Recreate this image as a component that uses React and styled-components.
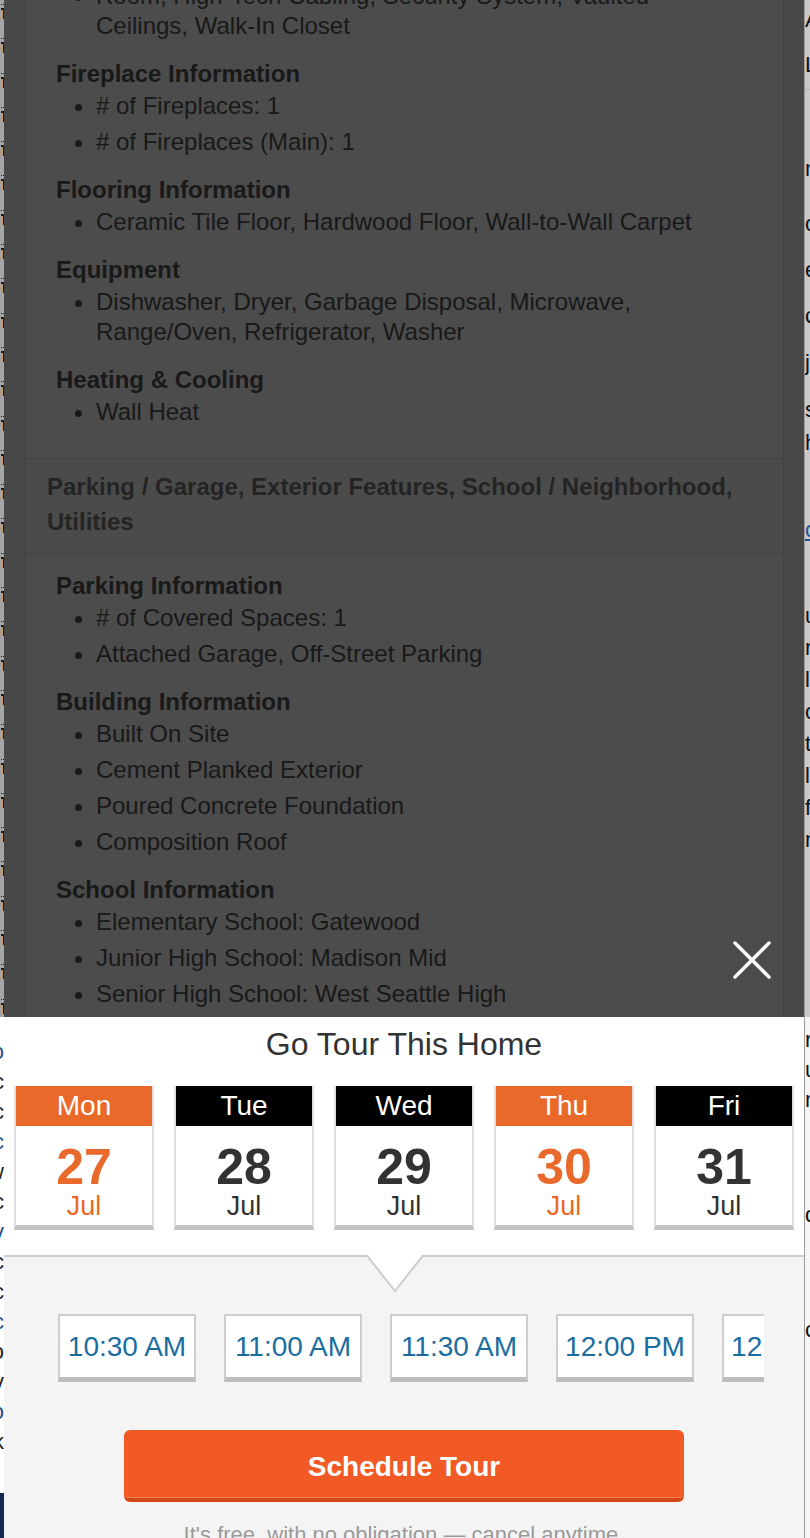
import React from 'react';
import styled, { createGlobalStyle } from 'styled-components';

const GlobalStyle = createGlobalStyle`
  html, body { margin: 0; padding: 0; background: #ffffff; }
  body { font-family: "Liberation Sans", Arial, Helvetica, sans-serif; }
  * { box-sizing: border-box; }
`;

const Page = styled.div`
  display: flex;
  width: 810px;
  height: 1538px;
  overflow: hidden;
`;

/* ---------- background page visible at the edges ---------- */
const EdgeLeft = styled.div`
  flex: 0 0 4px;
  min-width: 0;
  display: flex;
  flex-direction: column;
  overflow: hidden;
`;

const EdgeRight = styled.div`
  flex: 0 0 6px;
  min-width: 0;
  display: flex;
  flex-direction: column;
  overflow: hidden;
  border-left: 1px solid #9c9c9c;
`;

const EdgeSegment = styled.div`
  flex: ${p => (p.$grow ? '1 1 auto' : `0 0 ${p.$h}px`)};
  background: ${p => p.$bg};
  display: flex;
  flex-direction: column;
  align-items: ${p => (p.$end ? 'flex-end' : 'flex-start')};
  overflow: hidden;
  padding-top: ${p => p.$pt || 0}px;
`;

const EdgeLine = styled.div`
  flex: none;
  white-space: nowrap;
  font-size: 22px;
  height: ${p => p.$h || 34}px;
  line-height: ${p => p.$h || 34}px;
  color: ${p => p.$color || '#111'};
  text-decoration: ${p => (p.$link ? 'underline' : 'none')};
  border-bottom: ${p => (p.$rule ? '1px solid #b5b5b5' : '0')};
`;

/* tiny fragments of a control on the page behind the modal */
const EdgeMark = styled.div`
  flex: none;
  width: 4px;
  height: 34.3px;
  display: flex;
  flex-direction: column;
  align-items: flex-end;
  padding-top: 4px;
  gap: 2px;
`;

const MarkDots = styled.span`
  width: 3px;
  height: 2px;
  border-top: 1px dotted #222;
`;

const MarkBar = styled.span`
  width: 3px;
  height: 11px;
  border-top: 2px solid #1a1a1a;
  border-right: 1px solid #1a1a1a;
  background: #c49a6c;
`;

/* ---------- modal ---------- */
const Modal = styled.div`
  flex: 0 0 800px;
  width: 800px;
  min-width: 0;
  display: flex;
  flex-direction: column;
  background: #f4f4f4;
`;

const Backdrop = styled.div`
  position: relative;
  flex: 0 0 1017px;
  overflow: hidden;
  background: #f2f2f2;
  padding: 0 20px 0 21px;
`;

const Dim = styled.div`
  position: absolute;
  inset: 0;
  background: rgba(0, 0, 0, 0.7);
`;

const CloseButton = styled.button`
  position: absolute;
  right: 32px;
  bottom: 37px;
  width: 40px;
  height: 40px;
  padding: 0;
  border: 0;
  background: transparent;
  cursor: pointer;
  display: flex;
  align-items: center;
  justify-content: center;
`;

const Details = styled.div`
  background: #ffffff;
  border-left: 1px solid #dcdcdc;
  border-right: 1px solid #dcdcdc;
  color: #555555;
`;

const SectionHeader = styled.div`
  border-top: 1px solid #dcdcdc;
  border-bottom: 1px solid #dcdcdc;
  background: #fbfbfb;
  padding: 10px 20px 14px 21px;
  font-size: 24px;
  font-weight: 700;
  line-height: 35px;
  color: #7a7a7a;
`;

const SectionBody = styled.div`
  padding: ${p => (p.$first ? '0' : '17px')} 56px 31px 30px;
`;

const Group = styled.div`
  & + & { margin-top: 18px; }
  margin-top: ${p => (p.$cut ? '-19px' : '0')};
`;

const GroupTitle = styled.h4`
  margin: 0 0 2px;
  font-size: 24px;
  line-height: 30px;
  font-weight: 700;
  color: #555555;
`;

const Items = styled.ul`
  margin: 0;
  padding-left: 40px;
  list-style: disc;
`;

const Item = styled.li`
  font-size: 24px;
  line-height: 30px;
  & + & { margin-top: 6px; }
`;

/* ---------- tour sheet ---------- */
const DateSection = styled.div`
  position: relative;
  flex: none;
  background: #ffffff;
  border-bottom: 2px solid #cccccc;
  padding: 7px 10px 25px;
`;

const Title = styled.h2`
  margin: 0;
  text-align: center;
  font-size: 32px;
  line-height: 40px;
  font-weight: 400;
  color: #333333;
`;

const DateRow = styled.div`
  display: flex;
  gap: 20px;
  margin-top: 22px;
`;

const DateCard = styled.div`
  flex: 0 0 140px;
  background: #ffffff;
  border: 2px solid #dfdfdf;
  border-top: 0;
  border-bottom: 5px solid #c3c3c3;
  text-align: center;
  cursor: pointer;
`;

const DayName = styled.div`
  height: 40px;
  line-height: 40px;
  font-size: 28px;
  color: #ffffff;
  background: ${p => (p.$active ? '#e8692a' : '#000000')};
`;

const DayNum = styled.div`
  padding-top: 19px;
  font-size: 50px;
  line-height: 44px;
  font-weight: 700;
  color: ${p => (p.$active ? '#e8692a' : '#333333')};
`;

const Month = styled.div`
  padding: 3px 0 5px;
  font-size: 27px;
  line-height: 28px;
  color: ${p => (p.$active ? '#e8692a' : '#333333')};
`;

const Notch = styled.svg`
  position: absolute;
  top: 100%;
  left: 362px;
  display: block;
`;

const TimesSection = styled.div`
  flex: 1 1 auto;
  min-height: 0;
  background: #f4f4f4;
  padding: 57px 40px 0;
  display: flex;
  flex-direction: column;
`;

const Times = styled.div`
  flex: none;
  display: flex;
  min-width: 0;
  overflow: hidden;
`;

const TimeButton = styled.button`
  flex: 0 0 138px;
  margin: 0 14px;
  height: 68px;
  padding: 0;
  background: #ffffff;
  border: 2px solid #cdcdcd;
  border-bottom: 5px solid #bdbdbd;
  font-family: inherit;
  font-size: 28px;
  line-height: 61px;
  color: #1a6d9f;
  white-space: nowrap;
  overflow: hidden;
  cursor: pointer;
`;

const ScheduleButton = styled.button`
  align-self: center;
  flex: none;
  margin-top: 48px;
  width: 560px;
  height: 72px;
  padding: 6px 0 0;
  border: 0;
  border-bottom: 4px solid #d34a18;
  border-radius: 6px;
  background: #f15a24;
  box-shadow: inset 0 -1px 0 #f47d52;
  font-family: inherit;
  font-size: 28px;
  line-height: 62px;
  font-weight: 700;
  color: #ffffff;
  cursor: pointer;
`;

const Note = styled.p`
  flex: none;
  margin: 20px 0 0;
  text-align: center;
  font-size: 22px;
  line-height: 26px;
  color: #9a9a9a;
`;

const days = [
  { name: 'Mon', num: 27, active: true },
  { name: 'Tue', num: 28 },
  { name: 'Wed', num: 29 },
  { name: 'Thu', num: 30, active: true },
  { name: 'Fri', num: 31 },
];

const times = ['10:30 AM', '11:00 AM', '11:30 AM', '12:00 PM', '12:30 PM', '1:00 PM'];

const firstGroups = [
  { title: 'Fireplace Information', items: ['# of Fireplaces: 1', '# of Fireplaces (Main): 1'] },
  { title: 'Flooring Information', items: ['Ceramic Tile Floor, Hardwood Floor, Wall-to-Wall Carpet'] },
  { title: 'Equipment', items: ['Dishwasher, Dryer, Garbage Disposal, Microwave, Range/Oven, Refrigerator, Washer'] },
  { title: 'Heating & Cooling', items: ['Wall Heat'] },
];

const secondGroups = [
  { title: 'Parking Information', items: ['# of Covered Spaces: 1', 'Attached Garage, Off-Street Parking'] },
  { title: 'Building Information', items: ['Built On Site', 'Cement Planked Exterior', 'Poured Concrete Foundation', 'Composition Roof'] },
  { title: 'School Information', items: ['Elementary School: Gatewood', 'Junior High School: Madison Mid', 'Senior High School: West Seattle High'] },
  { title: 'Utilities Information', items: ['Sewer Connected, Water Connected', 'Water Company: Seattle'] },
];

const leftTop = Array.from({ length: 30 }, (_, i) => i);
const leftBottom = ['o', 'c', 'c', 'c', 'w', 'c', 'v', 'c', 'c', 'c', 'o', 'v', 'o', 'k'];
const rightTop = [
  { t: 'Area', h: 40 }, { t: 'Lot', h: 50, rule: true }, { t: '', h: 40, rule: true },
  { t: 'more', h: 78 }, { t: 'open', h: 32 }, { t: 'everyone', h: 60 }, { t: 'close', h: 32 },
  { t: 'just', h: 62 }, { t: 'said', h: 32 }, { t: 'have', h: 34 }, { t: 'open', h: 140, link: true },
  { t: 'used', h: 32 }, { t: 'run', h: 32 }, { t: 'level', h: 32 }, { t: 'old', h: 32 },
  { t: 'to', h: 32 }, { t: 'list', h: 32 }, { t: 'find', h: 32 }, { t: 'new', h: 32 },
];
const rightBottom = [
  { t: 'run', h: 30 }, { t: 'use', h: 30 }, { t: 'new', h: 30 }, { t: 'done', h: 200 },
  { t: 'close', h: 30 },
];

export default function App() {
  return (
    <>
      <GlobalStyle />
      <Page>
        <EdgeLeft>
          <EdgeSegment $h={1017} $bg="#a4a4a4" $end>
            {leftTop.map(i => (
              <EdgeMark key={i}>
                <MarkDots />
                <MarkBar />
              </EdgeMark>
            ))}
          </EdgeSegment>
          <EdgeSegment $h={476} $bg="#ffffff" $end $pt={20}>
            {leftBottom.map((t, i) => (
              <EdgeLine key={i} $h={30} $color={i % 3 === 0 ? '#1f4f8a' : '#222'}>{t}</EdgeLine>
            ))}
          </EdgeSegment>
          <EdgeSegment $grow $bg="#13284a" />
        </EdgeLeft>

        <Modal>
          <Backdrop>
            <Details>
              <SectionBody $first>
                <Group $cut>
                  <Items>
                    <Item>Room, High-Tech Cabling, Security System, Vaulted Ceilings, Walk-In Closet</Item>
                  </Items>
                </Group>
                {firstGroups.map(g => (
                  <Group key={g.title}>
                    <GroupTitle>{g.title}</GroupTitle>
                    <Items>
                      {g.items.map(it => <Item key={it}>{it}</Item>)}
                    </Items>
                  </Group>
                ))}
              </SectionBody>
              <SectionHeader>Parking / Garage, Exterior Features, School / Neighborhood, Utilities</SectionHeader>
              <SectionBody>
                {secondGroups.map(g => (
                  <Group key={g.title}>
                    <GroupTitle>{g.title}</GroupTitle>
                    <Items>
                      {g.items.map(it => <Item key={it}>{it}</Item>)}
                    </Items>
                  </Group>
                ))}
              </SectionBody>
            </Details>
            <Dim />
            <CloseButton aria-label="Close">
              <svg width="40" height="40" viewBox="0 0 40 40">
                <path d="M3 3 L37 37 M37 3 L3 37" stroke="#ffffff" strokeWidth="3.4" strokeLinecap="round" fill="none" />
              </svg>
            </CloseButton>
          </Backdrop>

          <DateSection>
            <Title>Go Tour This Home</Title>
            <DateRow>
              {days.map(d => (
                <DateCard key={d.name}>
                  <DayName $active={d.active}>{d.name}</DayName>
                  <DayNum $active={d.active}>{d.num}</DayNum>
                  <Month $active={d.active}>Jul</Month>
                </DateCard>
              ))}
            </DateRow>
            <Notch width="58" height="38" viewBox="0 0 58 38">
              <polygon points="0,-2 29,36 58,-2" fill="#ffffff" />
              <polyline points="0.5,0 29,36 57.5,0" fill="none" stroke="#cccccc" strokeWidth="2" />
            </Notch>
          </DateSection>

          <TimesSection>
            <Times>
              {times.map(t => <TimeButton key={t}>{t}</TimeButton>)}
            </Times>
            <ScheduleButton>Schedule Tour</ScheduleButton>
            <Note>It's free, with no obligation — cancel anytime.</Note>
          </TimesSection>
        </Modal>

        <EdgeRight>
          <EdgeSegment $h={1017} $bg="#c9c9c9">
            {rightTop.map((l, i) => (
              <EdgeLine key={i} $h={l.h} $rule={l.rule} $link={l.link} $color={l.link ? '#1f4f9a' : '#111'}>{l.t}</EdgeLine>
            ))}
          </EdgeSegment>
          <EdgeSegment $grow $bg="#f6f6f6" $pt={8}>
            {rightBottom.map((l, i) => (
              <EdgeLine key={i} $h={l.h}>{l.t}</EdgeLine>
            ))}
          </EdgeSegment>
        </EdgeRight>
      </Page>
    </>
  );
}
